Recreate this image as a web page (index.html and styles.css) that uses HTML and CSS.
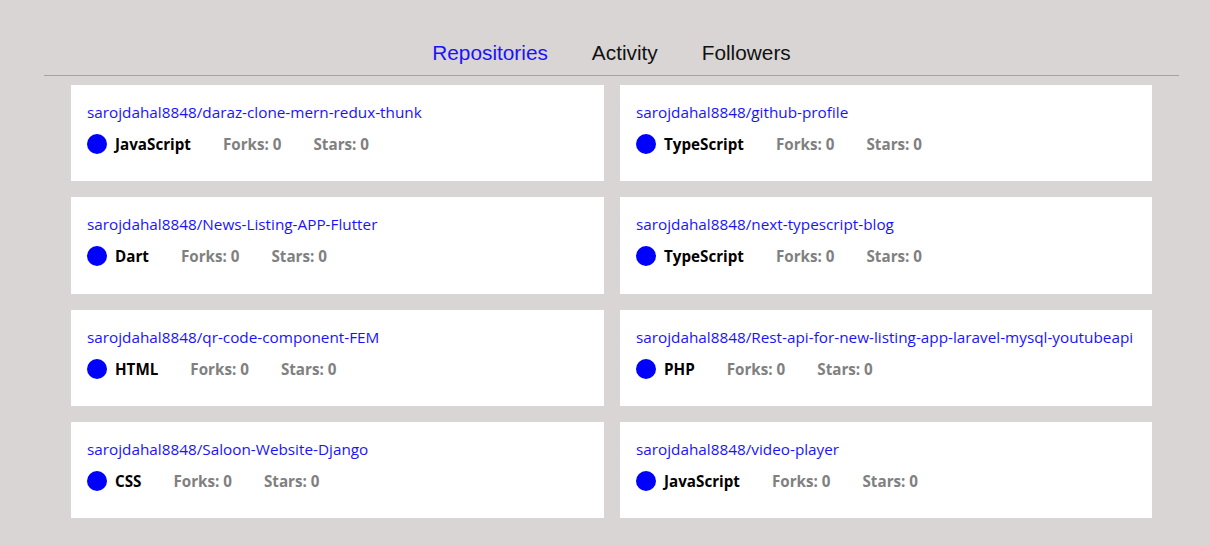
FILE: index.html
```html
<!DOCTYPE html>
<html>
<head>
<meta charset="utf-8">
<link rel="stylesheet" href="styles.css">
</head>
<body>
<div class="page">
  <nav class="tabs">
    <span class="tab active">Repositories</span>
    <span class="tab">Activity</span>
    <span class="tab">Followers</span>
  </nav>
  <div class="grid">
    <div class="card"><a class="title">sarojdahal8848/daraz-clone-mern-redux-thunk</a><div class="meta"><span class="dot"></span><span class="lang">JavaScript</span><span class="stat">Forks: 0</span><span class="stat">Stars: 0</span></div></div>
    <div class="card"><a class="title">sarojdahal8848/github-profile</a><div class="meta"><span class="dot"></span><span class="lang">TypeScript</span><span class="stat">Forks: 0</span><span class="stat">Stars: 0</span></div></div>
    <div class="card"><a class="title">sarojdahal8848/News-Listing-APP-Flutter</a><div class="meta"><span class="dot"></span><span class="lang">Dart</span><span class="stat">Forks: 0</span><span class="stat">Stars: 0</span></div></div>
    <div class="card"><a class="title">sarojdahal8848/next-typescript-blog</a><div class="meta"><span class="dot"></span><span class="lang">TypeScript</span><span class="stat">Forks: 0</span><span class="stat">Stars: 0</span></div></div>
    <div class="card"><a class="title">sarojdahal8848/qr-code-component-FEM</a><div class="meta"><span class="dot"></span><span class="lang">HTML</span><span class="stat">Forks: 0</span><span class="stat">Stars: 0</span></div></div>
    <div class="card"><a class="title">sarojdahal8848/Rest-api-for-new-listing-app-laravel-mysql-youtubeapi</a><div class="meta"><span class="dot"></span><span class="lang">PHP</span><span class="stat">Forks: 0</span><span class="stat">Stars: 0</span></div></div>
    <div class="card"><a class="title">sarojdahal8848/Saloon-Website-Django</a><div class="meta"><span class="dot"></span><span class="lang">CSS</span><span class="stat">Forks: 0</span><span class="stat">Stars: 0</span></div></div>
    <div class="card"><a class="title">sarojdahal8848/video-player</a><div class="meta"><span class="dot"></span><span class="lang">JavaScript</span><span class="stat">Forks: 0</span><span class="stat">Stars: 0</span></div></div>
  </div>
</div>
</body>
</html>
```
FILE: styles.css
```css
html, body {
  margin: 0;
  padding: 0;
  background: #d9d5d4;
}
.page {
  margin-left: 44px;
  width: 1135px;
}
.tabs {
  display: flex;
  justify-content: center;
  gap: 44px;
  padding-top: 41px;
  padding-bottom: 10px;
  border-bottom: 1px solid #a4a2a2;
  font-family: "Liberation Sans", Arial, sans-serif;
  font-size: 20.8px;
  line-height: 24px;
}
.tab { color: #111; }
.tab.active { color: #1a12ff; }
.grid {
  display: grid;
  grid-template-columns: 533px 532px;
  gap: 16px;
  margin: 9px 0 0 27px;
}
.card {
  background: #fff;
  height: 96.33px;
  box-sizing: border-box;
  padding: 16px 16px 0 16px;
  font-family: "Open Sans", "Noto Sans", sans-serif;
}
.title {
  display: block;
  color: #1a12ff;
  font-size: 15.3px;
  line-height: 22px;
  white-space: nowrap;
}
.meta {
  display: flex;
  align-items: center;
  margin-top: 11px;
  height: 20px;
  font-size: 15.2px;
  font-weight: 700;
}
.dot {
  width: 20px;
  height: 20px;
  border-radius: 50%;
  background: #0000ff;
  margin-right: 8px;
}
.lang { color: #000; margin-right: 32px; }
.stat { color: #808080; margin-right: 32px; }
```
